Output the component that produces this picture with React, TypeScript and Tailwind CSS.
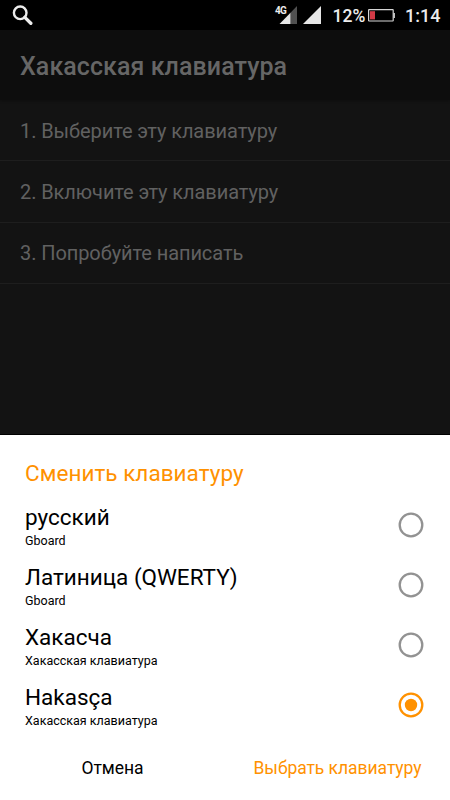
import { useState } from "react";

const steps = [
  "1. Выберите эту клавиатуру",
  "2. Включите эту клавиатуру",
  "3. Попробуйте написать",
];

const keyboards = [
  { name: "русский", app: "Gboard" },
  { name: "Латиница (QWERTY)", app: "Gboard" },
  { name: "Хакасча", app: "Хакасская клавиатура" },
  { name: "Hakasça", app: "Хакасская клавиатура" },
];

function StatusBar() {
  return (
    <div className="flex h-[30px] items-center bg-black text-[#ececec]">
      <svg
        className="ml-3 h-5 w-[21px]"
        viewBox="0 0 21 20"
        fill="none"
        stroke="currentColor"
      >
        <circle cx="8.2" cy="7.8" r="6.3" strokeWidth="2.4" />
        <path d="M12.8 12.4 18.8 18.2" strokeWidth="3.4" strokeLinecap="round" />
      </svg>
      <div className="relative ml-auto mr-[6px] h-[30px] w-[23px]">
        <span className="absolute top-[5px] left-px text-[10px] leading-[12px] font-bold tracking-[-0.8px]">
          4G
        </span>
        <svg className="absolute top-[6px] left-[5px]" width="19" height="18" viewBox="0 0 19 18">
          <path d="M11.5 6.7 18 0V18H11.5Z" fill="#505050" />
          <path d="M0.5 18 11.5 6.7V18Z" fill="#e6e6e6" />
        </svg>
      </div>
      <svg width="19" height="18" viewBox="0 0 19 18">
        <path d="M0 18 18 0V18Z" fill="#e6e6e6" />
      </svg>
      <span className="ml-[10.5px] w-[34.5px] pt-[2px] text-[17.5px] leading-[20px] font-medium whitespace-nowrap">
        12%
      </span>
      <svg className="ml-px" width="27" height="13" viewBox="0 0 27 13">
        <rect x="0.6" y="0.6" width="24.6" height="11.4" rx="0.5" fill="none" stroke="#d5d5d5" strokeWidth="1.2" />
        <path d="M25.4 4h1.5v5h-1.5z" fill="#d5d5d5" />
        <rect x="2" y="2.2" width="5" height="8.2" fill="#d33a46" />
      </svg>
      <span className="ml-[10px] w-[45px] pt-[2px] text-[18px] leading-[20px] font-medium whitespace-nowrap">
        1:14
      </span>
    </div>
  );
}

function Radio({ checked }: { checked: boolean }) {
  return (
    <svg
      className={checked ? "text-[#ff9100]" : "text-[#929292]"}
      width="26"
      height="26"
      viewBox="0 0 26 26"
    >
      <circle cx="13" cy="13" r="11.3" fill="none" stroke="currentColor" strokeWidth="2.3" />
      {checked && <circle cx="13" cy="13" r="6.2" fill="currentColor" />}
    </svg>
  );
}

export default function App() {
  const [selected, setSelected] = useState(3);

  return (
    <div className="flex h-[800px] w-[450px] flex-col overflow-hidden bg-[#131313] font-[Roboto,'Noto_Sans',sans-serif]">
      <StatusBar />
      <header className="flex h-[70px] items-center bg-[#0d0d0d] px-5 pt-[3px] text-[25px] leading-[30px] font-medium tracking-[0.07px] text-[#666] shadow-[0_1px_3px_rgba(0,0,0,0.3)]">
        Хакасская клавиатура
      </header>
      <ul className="h-[334px] text-[20px] leading-[24px] tracking-[-0.08px] text-[#616161]">
        {steps.map((step) => (
          <li
            key={step}
            className="flex h-[61.25px] items-center border-b border-[#1e1e1e] px-5 pt-px"
          >
            {step}
          </li>
        ))}
      </ul>
      <section className="flex flex-1 flex-col border-t border-black bg-white text-black">
        <h2 className="mt-[24px] px-[25px] text-[22.5px] leading-[28px] tracking-[0.04px] text-[#ff9100]">
          Сменить клавиатуру
        </h2>
        <div className="mt-[8px]">
          {keyboards.map((keyboard, i) => (
            <button
              key={keyboard.name}
              type="button"
              onClick={() => setSelected(i)}
              className="flex h-[60px] w-full items-center justify-between pr-[26px] pl-[25px] text-left"
            >
              <span className="flex flex-col pt-[3px]">
                <span className="text-[22.5px] leading-[28px]">{keyboard.name}</span>
                <span className="text-[12.5px] leading-[19px]">{keyboard.app}</span>
              </span>
              <Radio checked={selected === i} />
            </button>
          ))}
        </div>
        <div className="mt-[13px] flex text-[17.5px] leading-[40px] tracking-[-0.05px]">
          <button type="button" className="w-[225px]">
            Отмена
          </button>
          <button type="button" className="w-[225px] text-[#ff9100]">
            Выбрать клавиатуру
          </button>
        </div>
      </section>
    </div>
  );
}
